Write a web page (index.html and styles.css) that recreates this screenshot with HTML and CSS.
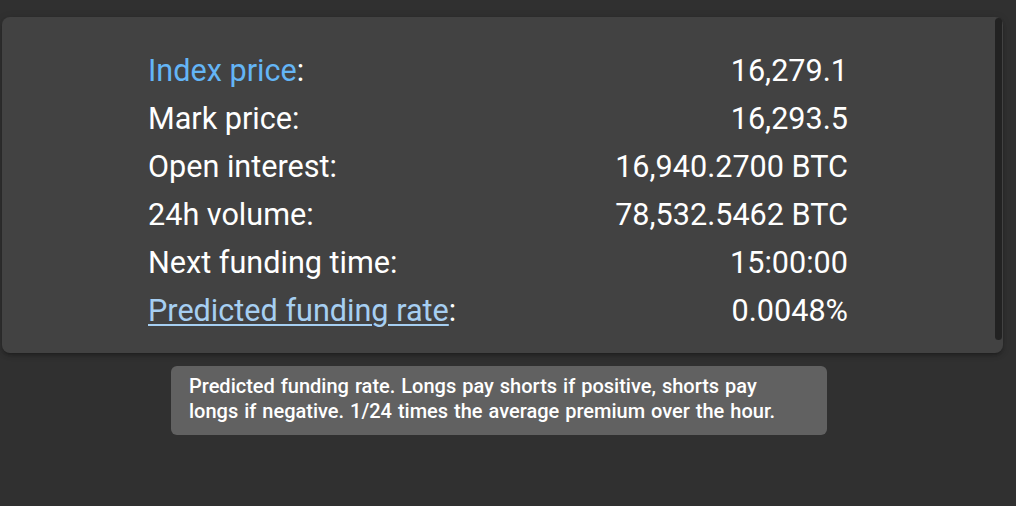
FILE: index.html
```html
<!DOCTYPE html>
<html lang="en">
<head>
    <meta charset="UTF-8">
    <title>Contract details</title>
    <link rel="stylesheet" href="styles.css">
</head>
<body>

    <!-- Contract stats card -->
    <div class="card">
        <table class="stats">
            <tr>
                <td><span class="term">Index price</span>:</td>
                <td class="value">16,279.1</td>
            </tr>
            <tr>
                <td>Mark price:</td>
                <td class="value">16,293.5</td>
            </tr>
            <tr>
                <td>Open interest:</td>
                <td class="value">16,940.2700 BTC</td>
            </tr>
            <tr>
                <td>24h volume:</td>
                <td class="value">78,532.5462 BTC</td>
            </tr>
            <tr>
                <td>Next funding time:</td>
                <td class="value">15:00:00</td>
            </tr>
            <tr>
                <td><span class="term hovered">Predicted funding rate</span>:</td>
                <td class="value">0.0048%</td>
            </tr>
        </table>
        <div class="scrollbar"></div>
    </div>

    <!-- Tooltip for the hovered term -->
    <div class="tooltip">
        Predicted funding rate. Longs pay shorts if positive, shorts pay<br>
        longs if negative. 1/24 times the average premium over the hour.
    </div>

</body>
</html>
```

FILE: styles.css
```css
body {
    margin: 0;
    background-color: #303030;
    font-family: Roboto, "Noto Sans", sans-serif;
    color: #fff;
}
.card {
    position: relative;
    margin: 17px 13px 0 2px;
    background-color: #424242;
    border-radius: 8px;
    box-shadow: 0 3px 3px -2px rgba(0,0,0,0.2), 0 3px 4px 0 rgba(0,0,0,0.14), 0 1px 8px 0 rgba(0,0,0,0.12);
    padding: 29px 0 19px 146px;
}
.stats {
    width: 700px;
    border-collapse: collapse;
    font-size: 30.6px;
}
.stats td {
    padding: 0;
    height: 48px;
}
.value {
    text-align: right;
}
.term {
    color: #64b5f6;
}
.term.hovered {
    color: #a6cff2;
    text-decoration: underline;
    text-underline-offset: 3px;
    text-decoration-thickness: 2px;
}
.scrollbar {
    position: absolute;
    top: 1px;
    right: 1px;
    width: 7px;
    height: 322px;
    border-radius: 4px;
    background-color: #222;
}
.tooltip {
    width: 620px;
    margin: 13px 0 0 171px;
    padding: 8px 18px 11px 18px;
    background-color: #616161;
    border-radius: 6px;
    font-size: 20px;
    font-weight: 500;
    line-height: 25px;
    word-spacing: 1px;
    white-space: nowrap;
}
```
